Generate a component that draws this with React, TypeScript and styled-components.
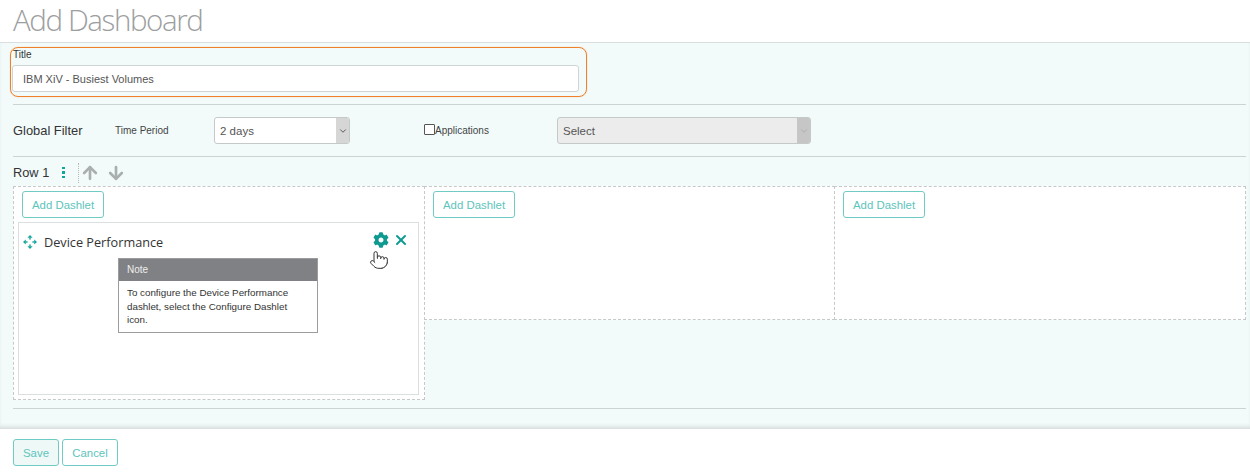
import React from 'react'
import styled, { createGlobalStyle } from 'styled-components'
import { ArrowDown, ArrowUp, ChevronDown, Pointer, X } from 'lucide-react'
import { FaCog } from 'react-icons/fa'

const GlobalStyle = createGlobalStyle`
  html, body {
    margin: 0;
    padding: 0;
    background: #fff;
    font-family: "Liberation Sans", Arial, sans-serif;
    overflow: hidden;
  }
`

const Page = styled.div`
  width: 1250px;
  height: 475px;
  display: flex;
  flex-direction: column;
`

const Header = styled.header`
  height: 42px;
  padding-left: 13px;
  border-bottom: 1px solid #d9dfdf;
  box-sizing: content-box;
`

const PageTitle = styled.h1`
  margin: 0;
  font-family: "Open Sans", sans-serif;
  font-weight: 300;
  font-size: 29.5px;
  line-height: 40px;
  color: #9c9ea0;
  letter-spacing: -1.4px;
`

const Body = styled.main`
  height: 386px;
  box-sizing: border-box;
  background: #f2fbfa;
  padding: 4px 4px 0 13px;
  box-shadow: inset 0 -4px 4px -2px #d4d8d8;
`

const Highlight = styled.div`
  width: 577px;
  height: 50px;
  box-sizing: border-box;
  margin-left: -3px;
  padding: 0 0 0 1px;
  border: 1px solid #f0802a;
  border-radius: 8px;
  box-shadow: 0 0 1px #f3a468;
`

const FieldLabel = styled.label`
  display: block;
  padding-left: 1px;
  font-size: 10px;
  line-height: 13px;
  color: #333;
`

const TitleInput = styled.input`
  display: block;
  width: 567px;
  height: 27px;
  margin-top: 4px;
  box-sizing: border-box;
  padding: 0 10px;
  border: 1px solid #cfd4d4;
  border-radius: 3px;
  background: #fff;
  font: 11px "Liberation Sans", sans-serif;
  color: #555;
  outline: none;
`

const Rule = styled.hr<{ $top?: number }>`
  margin: ${p => p.$top ?? 0}px 0 0;
  border: 0;
  border-top: 1px solid #cdd2d2;
`

const FilterRow = styled.section`
  height: 51px;
  display: flex;
  align-items: center;
  color: #333;
`

const FilterTitle = styled.div`
  width: 102px;
  font-size: 12.9px;
`

const FilterLabel = styled.div`
  width: 99px;
  font-size: 10px;
  color: #444;
`

const Select = styled.div<{ $width: number; $disabled?: boolean }>`
  width: ${p => p.$width}px;
  height: 27px;
  box-sizing: border-box;
  display: flex;
  align-items: center;
  justify-content: space-between;
  border: 1px solid #c4c9c9;
  border-radius: 3px;
  overflow: hidden;
  padding-left: 5px;
  font-size: 11.5px;
  color: #555;
  background: ${p => (p.$disabled ? '#ececec' : '#fff')};
`

const SelectArrow = styled.span<{ $disabled?: boolean }>`
  width: 13px;
  height: 100%;
  display: flex;
  align-items: center;
  justify-content: center;
  background: ${p => (p.$disabled ? '#c6c6c6' : '#d6d6d6')};
  color: ${p => (p.$disabled ? '#aaa' : '#444')};
`

const CheckField = styled.div`
  width: 133px;
  margin-left: 74px;
  display: flex;
  align-items: center;
  font-size: 10px;
  color: #444;
`

const CheckBox = styled.span`
  width: 9px;
  height: 9px;
  border: 1px solid #555;
  border-radius: 1px;
  background: #fff;
  margin-top: -2px;
`

const RowBar = styled.div`
  height: 29px;
  box-sizing: border-box;
  padding-top: 2px;
  display: flex;
  align-items: center;
  color: #333;
  font-size: 12.8px;
`

const Dots = styled.span`
  margin-left: 13px;
  display: flex;
  flex-direction: column;
  gap: 2px;

  i {
    width: 2.5px;
    height: 2.5px;
    background: #12a59a;
    display: block;
  }
`

const RowActions = styled.div`
  margin-left: 13px;
  padding-left: 1px;
  height: 20px;
  display: flex;
  align-items: center;
  gap: 6px;
  border-left: 1px dotted #b4b8b8;
  color: #a9aeae;
`

const Columns = styled.div`
  display: flex;
  align-items: flex-start;
`

const Column = styled.div<{ $height: number; $width: number }>`
  width: ${p => p.$width}px;
  height: ${p => p.$height}px;
  box-sizing: border-box;
  padding: 4px 4px 0 4px;
  background: #fff;
  border: 1px dashed #c6c9c9;
  margin-right: -1px;
`

const OutlineButton = styled.button<{ $active?: boolean; $width?: number }>`
  height: 27px;
  min-width: ${p => p.$width ?? 0}px;
  box-sizing: border-box;
  padding: 0 9px;
  background: ${p => (p.$active ? '#eef8f7' : '#fff')};
  border: 1px solid #6fcbc4;
  border-radius: 3px;
  color: #5cc4bc;
  font: 11.4px "Liberation Sans", sans-serif;
`

const AddButton = styled(OutlineButton)`
  display: block;
  margin-left: 4px;
`

const Dashlet = styled.article`
  position: relative;
  margin: 4px 1px 0 0;
  height: 173px;
  box-sizing: border-box;
  border: 1px solid #dcdfdf;
`

const DashletHead = styled.div`
  height: 35px;
  box-sizing: border-box;
  display: flex;
  align-items: center;
  padding: 2px 9px 0 4px;
`

const DashletName = styled.h2`
  margin: 0 0 0 7px;
  flex: 1;
  font-family: "Open Sans", sans-serif;
  font-weight: 400;
  font-size: 12.7px;
  color: #333;
`

const DashletTools = styled.div`
  display: flex;
  align-items: center;
  gap: 4px;
  margin-top: -4px;
  color: #0e9a90;
`

const Cursor = styled.span`
  position: absolute;
  left: 350px;
  top: 27px;
  width: 20px;
  height: 22px;
  color: #333;
`

const Note = styled.div`
  width: 200px;
  margin-left: 99px;
  box-sizing: border-box;
  border: 1px solid #9a9c9e;
  background: #fff;
`

const NoteHead = styled.div`
  height: 22px;
  line-height: 22px;
  padding-left: 8px;
  background: #808184;
  color: #eee;
  font-size: 10px;
`

const NoteText = styled.p`
  margin: 0;
  padding: 5px 8px 0;
  box-sizing: border-box;
  height: 51px;
  font-size: 9.8px;
  line-height: 13.5px;
  color: #333;
`

const Footer = styled.footer`
  display: flex;
  gap: 3px;
  padding: 10px 0 0 13px;
`

const MoveIcon = () => (
  <svg width="14" height="14" viewBox="0 0 14 14" fill="#12a59a">
    <path d="M7 0 9.6 2.8H4.400zM7 14 4.400 11.200H9.600zM0 7 2.800 4.400V9.600zM14 7 11.200 9.600V4.400z" />
    <rect x="6.3" y="2.600" width="1.400" height="2" />
    <rect x="6.3" y="9.400" width="1.400" height="2" />
    <rect x="2.600" y="6.300" width="2" height="1.400" />
    <rect x="9.400" y="6.300" width="2" height="1.400" />
  </svg>
)

const App: React.FunctionComponent = () => (
  <Page>
    <GlobalStyle />
    <Header>
      <PageTitle>Add Dashboard</PageTitle>
    </Header>
    <Body>
      <Highlight>
        <FieldLabel>Title</FieldLabel>
        <TitleInput defaultValue="IBM XiV - Busiest Volumes" />
      </Highlight>
      <Rule $top={7} />
      <FilterRow>
        <FilterTitle>Global Filter</FilterTitle>
        <FilterLabel>Time Period</FilterLabel>
        <Select $width={136}>
          2 days
          <SelectArrow><ChevronDown size={10} /></SelectArrow>
        </Select>
        <CheckField><CheckBox />Applications</CheckField>
        <Select $width={254} $disabled>
          Select
          <SelectArrow $disabled><ChevronDown size={10} /></SelectArrow>
        </Select>
      </FilterRow>
      <Rule />
      <RowBar>
        Row 1
        <Dots><i /><i /><i /></Dots>
        <RowActions>
          <ArrowUp size={20} strokeWidth={3.2} />
          <ArrowDown size={20} strokeWidth={3.2} />
        </RowActions>
      </RowBar>
      <Columns>
        <Column $width={412} $height={214}>
          <AddButton>Add Dashlet</AddButton>
          <Dashlet>
            <DashletHead>
              <MoveIcon />
              <DashletName>Device Performance</DashletName>
              <DashletTools>
                <FaCog size={16} />
                <X size={16} strokeWidth={3} />
              </DashletTools>
            </DashletHead>
            <Cursor><Pointer size={20} strokeWidth={1.2} fill="#fff" /></Cursor>
            <Note>
              <NoteHead>Note</NoteHead>
              <NoteText>To configure the Device Performance dashlet, select the Configure Dashlet icon.</NoteText>
            </Note>
          </Dashlet>
        </Column>
        <Column $width={411} $height={134}>
          <AddButton>Add Dashlet</AddButton>
        </Column>
        <Column $width={412} $height={134}>
          <AddButton>Add Dashlet</AddButton>
        </Column>
      </Columns>
      <Rule $top={8} />
    </Body>
    <Footer>
      <OutlineButton $active $width={46}>Save</OutlineButton>
      <OutlineButton $width={56}>Cancel</OutlineButton>
    </Footer>
  </Page>
)

export default App
